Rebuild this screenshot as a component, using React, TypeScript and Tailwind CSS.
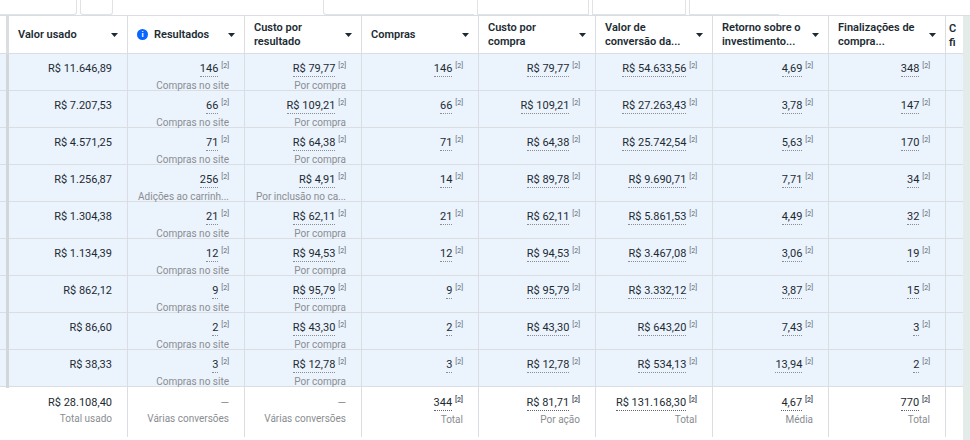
import React from "react";

type Row = {
  valor: string;
  res: string;
  resSub: string;
  cpr: string;
  cprSub: string;
  compras: string;
  cpc: string;
  conv: string;
  roi: string;
  fin: string;
};

const ROWS: Row[] = [
  { valor: "R$ 11.646,89", res: "146", resSub: "Compras no site", cpr: "R$ 79,77", cprSub: "Por compra", compras: "146", cpc: "R$ 79,77", conv: "R$ 54.633,56", roi: "4,69", fin: "348" },
  { valor: "R$ 7.207,53", res: "66", resSub: "Compras no site", cpr: "R$ 109,21", cprSub: "Por compra", compras: "66", cpc: "R$ 109,21", conv: "R$ 27.263,43", roi: "3,78", fin: "147" },
  { valor: "R$ 4.571,25", res: "71", resSub: "Compras no site", cpr: "R$ 64,38", cprSub: "Por compra", compras: "71", cpc: "R$ 64,38", conv: "R$ 25.742,54", roi: "5,63", fin: "170" },
  { valor: "R$ 1.256,87", res: "256", resSub: "Adições ao carrinh...", cpr: "R$ 4,91", cprSub: "Por inclusão no ca...", compras: "14", cpc: "R$ 89,78", conv: "R$ 9.690,71", roi: "7,71", fin: "34" },
  { valor: "R$ 1.304,38", res: "21", resSub: "Compras no site", cpr: "R$ 62,11", cprSub: "Por compra", compras: "21", cpc: "R$ 62,11", conv: "R$ 5.861,53", roi: "4,49", fin: "32" },
  { valor: "R$ 1.134,39", res: "12", resSub: "Compras no site", cpr: "R$ 94,53", cprSub: "Por compra", compras: "12", cpc: "R$ 94,53", conv: "R$ 3.467,08", roi: "3,06", fin: "19" },
  { valor: "R$ 862,12", res: "9", resSub: "Compras no site", cpr: "R$ 95,79", cprSub: "Por compra", compras: "9", cpc: "R$ 95,79", conv: "R$ 3.332,12", roi: "3,87", fin: "15" },
  { valor: "R$ 86,60", res: "2", resSub: "Compras no site", cpr: "R$ 43,30", cprSub: "Por compra", compras: "2", cpc: "R$ 43,30", conv: "R$ 643,20", roi: "7,43", fin: "3" },
  { valor: "R$ 38,33", res: "3", resSub: "Compras no site", cpr: "R$ 12,78", cprSub: "Por compra", compras: "3", cpc: "R$ 12,78", conv: "R$ 534,13", roi: "13,94", fin: "2" },
];

const COLS = "grid grid-cols-[9px_119px_117px_117px_117px_117px_117px_116px_117px_17px]";

const Caret = () => (
  <svg width="7" height="4" viewBox="0 0 7 4" className="shrink-0">
    <path d="M0 0h7L3.5 4z" fill="#1c2b33" />
  </svg>
);

const Num = ({ v, sub }: { v: string; sub?: string }) => (
  <div className="flex flex-col items-end">
    <div className="flex items-start gap-[3px] pr-[6px]">
      <span className="border-b border-dotted border-[#8a8d91] leading-[15px]">{v}</span>
      <span className="text-[7px] text-[#606770] leading-[10px]">[2]</span>
    </div>
    {sub && <span className="text-[10px] text-[#8a8d91] leading-[13px] mt-[2px] whitespace-nowrap pr-[6px]">{sub}</span>}
  </div>
);

const Head = ({ title, info }: { title: React.ReactNode; info?: boolean }) => (
  <div className="flex items-center justify-between px-[9px] border-r border-[#dadde1] text-[11px] font-semibold leading-[14px] text-[#1c2b33]">
    <div className="flex items-center gap-[6px]">
      {info && (
        <span className="w-[11px] h-[11px] rounded-full bg-[#0866ff] text-white text-[8px] flex items-center justify-center font-bold">i</span>
      )}
      <span>{title}</span>
    </div>
    <Caret />
  </div>
);

const Cell = ({ children }: { children?: React.ReactNode }) => (
  <div className="flex justify-end px-[9px] pt-[7px] border-r border-[#dadde1]">{children}</div>
);

const Foot = ({ v, sub, plain, dash }: { v?: string; sub: string; plain?: boolean; dash?: boolean }) => (
  <div className="flex flex-col items-end px-[9px] pt-[8px] border-r border-[#dadde1]">
    {dash ? (
      <span className="text-[#8a8d91] leading-[15px] pr-[6px]">—</span>
    ) : plain ? (
      <span className="leading-[15px] pr-[6px]">{v}</span>
    ) : (
      <div className="flex items-start gap-[3px] pr-[6px]">
        <span className="border-b border-dotted border-[#606770] leading-[15px]">{v}</span>
        <span className="text-[7px] font-bold text-[#606770] leading-[10px]">[2]</span>
      </div>
    )}
    <span className="text-[10px] text-[#8a8d91] leading-[13px] mt-[2px] pr-[6px] whitespace-nowrap">{sub}</span>
  </div>
);

export default function App() {
  return (
    <div
      className="w-[970px] h-[440px] overflow-hidden bg-white text-[11px] text-[#1c2b33] relative"
      style={{ fontFamily: "Roboto, 'Liberation Sans', sans-serif" }}
    >
      <div className="h-[16px] flex border-b border-[#dadde1]">
        <div className="w-[77px] border-r border-b border-[#dfe2e6] rounded-br-[3px]" />
        <div className="w-[33px] ml-[3px] border-x border-b border-[#dfe2e6] rounded-b-[3px]" />
        <div className="w-[151px] ml-[210px] border-l border-b border-[#dfe2e6] rounded-bl-[3px]" />
        <div className="w-[112px] ml-[3px] border-x border-b border-[#dfe2e6]" />
        <div className="w-[94px] ml-[3px] border-x border-b border-[#dfe2e6]" />
        <div className="w-[90px] ml-[3px] border-l border-b border-[#dfe2e6]" />
      </div>
      <div className={`${COLS} h-[38px] border-b border-[#dadde1]`}>
        <div className="border-r-[3px] border-[#dadde1]" />
        <Head title="Valor usado" />
        <Head title="Resultados" info />
        <Head title={<>Custo por<br />resultado</>} />
        <Head title="Compras" />
        <Head title={<>Custo por<br />compra</>} />
        <Head title={<>Valor de<br />conversão da...</>} />
        <Head title={<>Retorno sobre o<br />investimento...</>} />
        <Head title={<>Finalizações de<br />compra...</>} />
        <div className="pl-[3px] text-[11px] font-semibold leading-[14px] pt-[6px]">C<br />fi</div>
      </div>
      {ROWS.map((r, i) => (
        <div key={i} className={`${COLS} h-[37px] bg-[#ebf3fd] border-b border-[#dadde1]`}>
          <div className="border-r-[3px] border-[#d3d7dc]" />
          <div className="flex justify-end px-[9px] pt-[7px] border-r border-[#dadde1] leading-[15px]">
            <span className="pr-[6px]">{r.valor}</span>
          </div>
          <Cell><Num v={r.res} sub={r.resSub} /></Cell>
          <Cell><Num v={r.cpr} sub={r.cprSub} /></Cell>
          <Cell><Num v={r.compras} /></Cell>
          <Cell><Num v={r.cpc} /></Cell>
          <Cell><Num v={r.conv} /></Cell>
          <Cell><Num v={r.roi} /></Cell>
          <Cell><Num v={r.fin} /></Cell>
          <div />
        </div>
      ))}
      <div className={`${COLS} h-[50px]`}>
        <div />
        <Foot v="R$ 28.108,40" sub="Total usado" plain />
        <Foot sub="Várias conversões" dash />
        <Foot sub="Várias conversões" dash />
        <Foot v="344" sub="Total" />
        <Foot v="R$ 81,71" sub="Por ação" />
        <Foot v="R$ 131.168,30" sub="Total" />
        <Foot v="4,67" sub="Média" />
        <Foot v="770" sub="Total" />
        <div />
      </div>
      <div className="absolute right-0 top-[16px] w-[7px] h-[424px] bg-[#e4ece9]" />
    </div>
  );
}
